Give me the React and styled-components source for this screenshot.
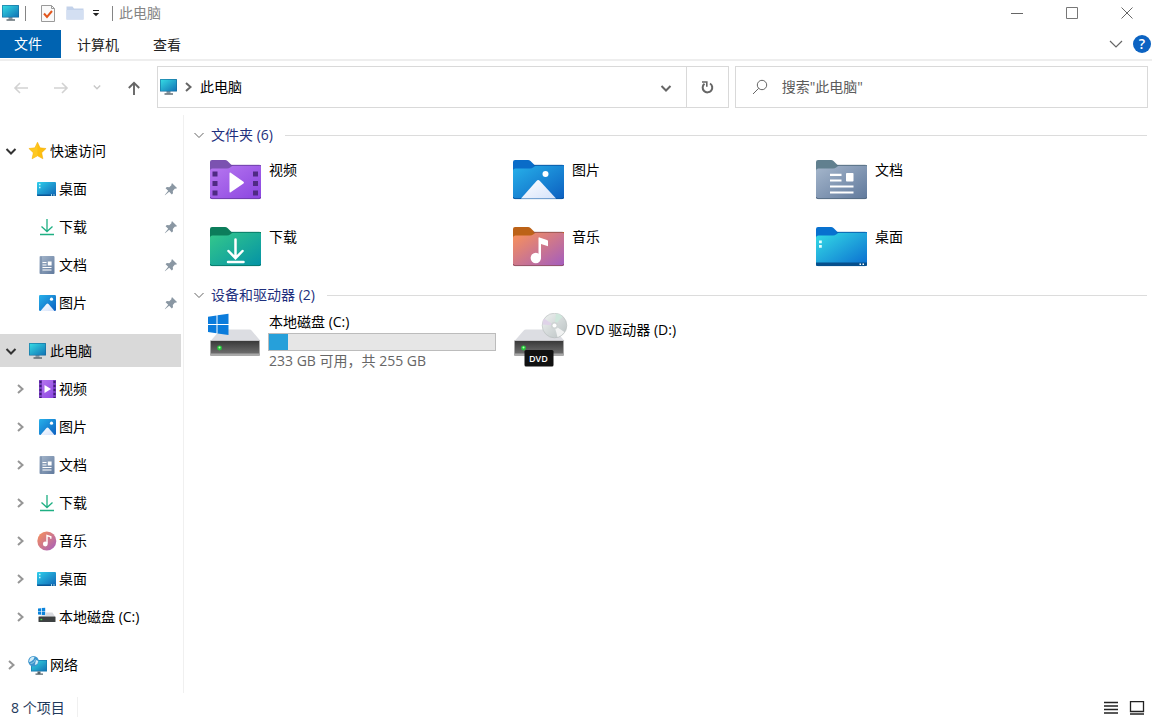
import React from 'react';
import styled, { createGlobalStyle, css } from 'styled-components';

const GlobalStyle = createGlobalStyle`
  * {
    box-sizing: border-box;
  }
  body {
    margin: 0;
    background: #fff;
    color: #000;
    font-family: "Open Sans", "Noto Sans CJK SC", sans-serif;
    font-size: 14px;
    line-height: 18px;
  }
  button, input {
    font: inherit;
    color: inherit;
    border: 0;
    padding: 0;
    background: none;
  }
  svg {
    display: block;
    flex-shrink: 0;
  }
  ul {
    list-style: none;
    margin: 0;
    padding: 0;
  }
`;

/* ---------- icons ---------- */

const GradientSheet = styled.svg`
  position: absolute;
`;

const gradients = [
  ['gMonitor', '#35dbe4', '#1273b5'],
  ['gDesktop', '#2fd0ec', '#0f63b4'],
  ['gVideo', '#b878f0', '#8a45e0'],
  ['gPicture', '#27b1ea', '#0c5fc0'],
  ['gDoc', '#a6b7cc', '#60799c'],
  ['gDownload', '#35c98a', '#0492a6'],
  ['gMusic', '#fb9357', '#a25cc0'],
  ['gDeskFolder', '#35dde6', '#0a6cd0'],
  ['gSnow', '#ffffff', '#d5e2fa'],
  ['gDisc', '#f0f3f2', '#b9c1c2'],
];

const Gradients = () => (
  <GradientSheet width="0" height="0" aria-hidden="true">
    <defs>
      {gradients.map(([id, from, to]) => (
        <linearGradient key={id} id={id} x1="0" y1="0" x2="1" y2="1">
          <stop offset="0" stopColor={from} />
          <stop offset="1" stopColor={to} />
        </linearGradient>
      ))}
      <linearGradient id="gDrive" x1="0" y1="0" x2="0" y2="1">
        <stop offset="0" stopColor="#393939" />
        <stop offset="1" stopColor="#6d6d6d" />
      </linearGradient>
    </defs>
  </GradientSheet>
);

const Svg = ({ w = 20, h = 20, children, ...rest }) => (
  <svg width={w} height={h} viewBox={`0 0 ${w} ${h}`} fill="none" aria-hidden="true" {...rest}>
    {children}
  </svg>
);

const MonitorIcon = () => (
  <Svg>
    <path d="M7.5 14h4v2.5h-4z" fill="#8a98a3" />
    <rect x="1" y="2" width="17" height="12.5" rx=".6" fill="#176a9c" />
    <rect x="1.6" y="2.6" width="15.8" height="11.3" fill="url(#gMonitor)" />
    <path d="M5.5 17h8.5" stroke="#4b5960" strokeWidth="1.3" />
  </Svg>
);

const StarIcon = () => (
  <Svg>
    <path d="M9.5 1.2l2.6 5.6 6 .7-4.4 4.2 1.2 6.1-5.4-3-5.4 3 1.2-6.1L.9 7.500l6-.7z" fill="#fdbf0f" stroke="#f5a800" strokeWidth=".5" />
    <path d="M9.500 1.500v13.200l-5.200 2.900 1.200-5.900L1.300 7.600l5.700-.7z" fill="#ffcf2e" opacity=".6" />
  </Svg>
);

const DesktopIcon = () => (
  <Svg>
    <rect x="0" y="3" width="19" height="14" rx="1" fill="url(#gDesktop)" />
    <path d="M0 15.500h19V16a1 1 0 0 1-1 1H1a1 1 0 0 1-1-1z" fill="#0a5696" />
    <path d="M2 5.500h1.500M2 8.500h1.500M14 16h1M16.500 16h1" stroke="#c8f6ff" strokeWidth="1.3" />
  </Svg>
);

const DownloadIcon = () => (
  <Svg>
    <path d="M10 2v12.500M4.500 9.500l5.500 5 5.500-5M3 17.500h14" stroke="#1eaf83" strokeWidth="1.3" />
  </Svg>
);

const DocIcon = () => (
  <Svg>
    <rect x="2.500" y="1" width="15" height="18" rx="1" fill="url(#gDoc)" />
    <path d="M4 1.500v17" stroke="#6c83a2" />
    <path d="M5.500 7.500h4M5.500 10h4M5.500 12.500h9M5.500 15h9" stroke="#fff" strokeWidth="1.100" />
    <path d="M10.800 6.500h3.800v4h-3.800z" fill="#fff" />
  </Svg>
);

const PictureIcon = () => (
  <Svg>
    <rect x="2" y="2" width="17" height="16" rx="1.200" fill="url(#gPicture)" />
    <path d="M3.500 18l6-7q1-1 2 0l6 7z" fill="url(#gSnow)" />
    <circle cx="14.500" cy="6.200" r="1.600" fill="#fff" />
  </Svg>
);

const VideoIcon = () => (
  <Svg>
    <rect x="2" y="1" width="17" height="18" rx="1" fill="url(#gVideo)" />
    <path d="M2 1h3v18H2zM16 1h3v18h-3z" fill="#7a3fc4" />
    <path d="M3.500 2v17M17.500 2v17" stroke="#3f1d74" strokeWidth="2" strokeDasharray="2 2" />
    <path d="M7.500 6v8l6.500-4z" fill="#fff" />
  </Svg>
);

const MusicIcon = () => (
  <Svg>
    <circle cx="9.800" cy="10" r="9.500" fill="url(#gMusic)" />
    <path d="M10 12.500V4.500l3.800 1.300v2" stroke="#fff" strokeWidth="1.400" />
    <circle cx="8.300" cy="13" r="2.400" fill="#fff" />
  </Svg>
);

const SmallDriveIcon = () => (
  <Svg>
    <path d="M1 1.500L4 1.200v3H1zM4.700 1.100L8.200.7v3.500H4.700zM1 4.800h3v3l-3-.3zM4.700 4.800h3.500v3.500l-3.500-.4z" fill="#0b84dc" />
    <path d="M8.500 5.500h7l2.500 4H2.500L4.500 8.500h4z" fill="#d9dbe0" />
    <rect x="1.500" y="9.500" width="17" height="5.500" rx=".5" fill="#3d4142" />
    <path d="M3.500 12.500h1.700" stroke="#4be04b" strokeWidth="1.400" />
  </Svg>
);

const NetworkIcon = () => (
  <Svg>
    <rect x="3" y="5" width="16" height="11.500" fill="#1679ae" />
    <rect x="3.700" y="5.700" width="14.600" height="10" fill="url(#gMonitor)" />
    <path d="M9.500 16.500h3v2h-3zM7.500 18.500h7.500v1.200H7.500z" fill="#56656e" />
    <circle cx="5.500" cy="6.200" r="5.300" fill="#3c94cd" />
    <path d="M2 3.500q2-2.500 4.500-1.500l-1 2.500L3 6.500.8 7zM8 5l2.300 1-1 3-2.500 1z" fill="#d1ecf7" />
    <path d="M2.500 8.500q3 .5 5-4" stroke="#93cbe7" />
  </Svg>
);

const PinIcon = () => (
  <Svg w={14} h={14}>
    <path d="M8.200 1.200L13 6l-1 .8-1-.2-2.200 2.300.2 2.300-1.200 1.200L5.200 9.800 1 13.200.8 13l3.400-4.200-2.600-2.600L2.800 5l2.500.2 2.300-2.200-.3-1z" fill="#8a97a3" />
  </Svg>
);

const chevrons = {
  down: 'M1.500 4l4.500 4.500L10.500 4',
  right: 'M4 2l4.500 4L4 10',
};

const Chevron = ({ dir = 'down', color = '#333', weight = 2 }) => (
  <Svg w={12} h={12}>
    <path d={chevrons[dir]} stroke={color} strokeWidth={weight} />
  </Svg>
);

/* big folder: tab, body, then whatever sits on the front */
const Folder = ({ tab, fill, edge, children }) => (
  <Svg w={51} h={41}>
    <path d="M0 3a2 2 0 0 1 2-2h13q1.500 0 2.500 1l4 4H51v8H0z" fill={tab} />
    <path d="M0 12q0-2.500 2.500-2.500H17q2 0 3.500-1.300T24 6.500h25.500A1.500 1.500 0 0 1 51 8v30.500A1.500 1.500 0 0 1 49.500 40h-48A1.500 1.500 0 0 1 0 38.500z" fill={fill} />
    <path d="M20.500 6.300h29.200" stroke={edge} strokeWidth=".8" />
    <path d="M.4 38q.1 1.600 1.500 1.600h47.200q1.400 0 1.500-1.600" stroke={edge} strokeWidth=".9" />
    {children}
  </Svg>
);

const VideoFolder = () => (
  <Folder tab="#7b52b0" fill="url(#gVideo)" edge="#6a3ba5">
    <path d="M2.500 12.500h5v5h-5zM2.500 22h5v5h-5zM2.500 31.500h5v5h-5zM43 12.500h5v5h-5zM43 22h5v5h-5zM43 31.500h5v5h-5z" fill="#4f2a84" />
    <path d="M19.500 14.500v18q0 1.500 1.200.7l12.800-8.800q1-.8 0-1.600l-12.800-9q-1.200-.8-1.200.7z" fill="#fff" />
  </Folder>
);

const PictureFolder = () => (
  <Folder tab="#0a6cc8" fill="url(#gPicture)" edge="#0a559f">
    <path d="M8 39.500L23.500 22q1.700-1.800 3.400 0L43 39.500z" fill="url(#gSnow)" />
    <circle cx="32.500" cy="15" r="3" fill="#fff" />
  </Folder>
);

const DocFolder = () => (
  <Folder tab="#61808f" fill="url(#gDoc)" edge="#53697f">
    <path d="M14 15.800h11.500M14 21.500h11.500M14 27.500h23.500M14 33.500h23.500" stroke="#fff" strokeWidth="2.200" />
    <rect x="30" y="14" width="7.500" height="8.500" rx=".8" fill="#fff" />
  </Folder>
);

const DownloadFolder = () => (
  <Folder tab="#0c7d5b" fill="url(#gDownload)" edge="#087768">
    <path d="M25.500 13.500v18M18.500 25l7 7.200 7-7.200M18 36h15.500" stroke="#fff" strokeWidth="2.500" strokeLinecap="round" />
  </Folder>
);

const MusicFolder = () => (
  <Folder tab="#bc6217" fill="url(#gMusic)" edge="#8d5060">
    <path d="M25.500 12q0-.8 1-.6l7.500 2.500q1 .3 1 1.200v5.200l-7-2.200v14.500h-2.500z" fill="#fff" />
    <circle cx="22.800" cy="32" r="5.200" fill="#fff" />
  </Folder>
);

const DesktopFolder = () => (
  <Folder tab="#0871cf" fill="url(#gDeskFolder)" edge="#075aa5">
    <path d="M0 36.500h51v2a1.500 1.500 0 0 1-1.500 1.500h-48A1.500 1.500 0 0 1 0 38.500z" fill="#07508d" />
    <path d="M3 14.500h2.800v2.800H3zM3 19h2.800v2.800H3z" fill="#e5ffff" />
    <path d="M43.500 38.300h1.500M46.500 38.300H48" stroke="#fff" strokeWidth="1.400" />
  </Folder>
);

const DriveBody = () => (
  <>
    <path d="M13 17.500h27.500q1.500 0 2.300 1.200L51.500 29h-50l9-10.300q1-1.200 2.500-1.200z" fill="#dcdde2" />
    <path d="M1 28.500h50V43q0 1-1 1H2q-1 0-1-1z" fill="#a9a9a9" />
    <path d="M2 29h48v12.500H2z" fill="url(#gDrive)" />
    <circle cx="10.500" cy="36" r="2.400" fill="#24c83a" />
    <circle cx="10.500" cy="35.600" r="1" fill="#b6ffb0" />
  </>
);

const SystemDrive = () => (
  <Svg w={54} h={55}>
    <g transform="translate(1 -1)">
      <DriveBody />
    </g>
    <path d="M0 3.800l8.500-1.300V11H0zM9.500 2.300L20.500.7V11h-11zM0 12h8.500v8.300L0 19zM9.500 12h11v10L9.500 20.400z" fill="#0b7cdc" />
  </Svg>
);

const DvdText = styled.text`
  font: 600 9px "Open Sans", sans-serif;
  fill: #fff;
`;

const DvdDrive = () => (
  <Svg w={57} h={55}>
    <g transform="translate(2 -1)">
      <DriveBody />
    </g>
    <g transform="translate(3 0)">
      <circle cx="40.500" cy="12.500" r="12.300" fill="url(#gDisc)" stroke="#b5bbbb" strokeWidth=".6" />
      <path d="M40.500 12.500L30 5.500a12.300 12.300 0 0 0-1.500 6z" fill="#dfd3e8" />
      <path d="M40.500 12.500l3 11.800a12.300 12.300 0 0 0 7-5.300z" fill="#fbfbfb" opacity=".8" />
      <path d="M40.500 12.500L42 .5a12.300 12.300 0 0 1 6.500 3z" fill="#cfe7dc" />
      <circle cx="40.500" cy="12.500" r="3.600" fill="#cfd4d4" />
      <circle cx="40.500" cy="12.500" r="2" fill="#fff" />
      <rect x="10.500" y="37" width="29" height="16.500" rx="1.500" fill="#111" />
      <DvdText x="15" y="49">DVD</DvdText>
    </g>
  </Svg>
);

/* ---------- title bar ---------- */

const Window = styled.div`
  min-height: 100vh;
  display: flex;
  flex-direction: column;
`;

const TitleBar = styled.header`
  height: 30px;
  display: flex;
  align-items: flex-start;
  padding-left: 1px;
`;

const QuickTools = styled.div`
  height: 26px;
  display: flex;
  align-items: center;
`;

const ToolButton = styled.button`
  width: ${({ $w }) => $w}px;
  height: 26px;
  display: flex;
  align-items: center;
  justify-content: center;
`;

const Divider = styled.span`
  width: 1px;
  height: 15px;
  background: #858585;
  margin: 0 ${({ $after }) => $after}px 0 ${({ $before }) => $before}px;
`;

const Title = styled.h1`
  margin: 0;
  font-size: 14px;
  font-weight: 400;
  color: #858585;
`;

const WindowButtons = styled.div`
  margin-left: auto;
  display: flex;
  gap: 5px;
`;

/* ---------- ribbon ---------- */

const Ribbon = styled.nav`
  height: 31px;
  display: flex;
  align-items: flex-start;
  border-bottom: 2px solid #eee;
`;

const Tab = styled.button`
  height: 28px;
  padding: 1px 18px 0 16px;
  color: #222;
  ${({ $primary }) =>
    $primary &&
    css`
      padding: 0 19px 0 14px;
      background: #0063b1;
      color: #fff;
    `}
`;

const RibbonEnd = styled.div`
  height: 28px;
  margin-left: auto;
  padding-right: 1px;
  display: flex;
  align-items: center;
  gap: 10px;
`;

const Help = styled.button`
  width: 18px;
  height: 18px;
  border-radius: 50%;
  background: #0c63c2;
  color: #fff;
  font-weight: 600;
  line-height: 18px;
`;

/* ---------- address row ---------- */

const AddressRow = styled.div`
  display: flex;
  align-items: center;
  padding: 5px 4px 7px 3px;
`;

const NavButton = styled.button`
  width: ${({ $w }) => $w}px;
  height: 42px;
  display: flex;
  align-items: center;
  justify-content: center;
`;

const AddressBox = styled.div`
  flex: 3 1 0;
  height: 42px;
  display: flex;
  align-items: center;
  gap: 3px;
  border: 1px solid #d9d9d9;
  padding-left: 1px;
`;

const Crumb = styled.button`
  margin-left: 3px;
`;

const AddressEnd = styled.div`
  margin-left: auto;
  height: 40px;
  display: flex;
`;

const Refresh = styled(NavButton)`
  height: 40px;
  border-left: 1px solid #d9d9d9;
`;

const SearchBox = styled.label`
  flex: 2 1 0;
  height: 42px;
  margin-left: 6px;
  padding: 0 16px;
  display: flex;
  align-items: center;
  gap: 14px;
  border: 1px solid #d9d9d9;
`;

const SearchInput = styled.input`
  flex: 1;
  min-width: 0;
  outline: none;
  &::placeholder {
    color: #5c5c5c;
    opacity: 1;
  }
`;

/* ---------- body ---------- */

const Body = styled.div`
  flex: 1;
  display: flex;
`;

const Sidebar = styled.aside`
  width: 184px;
  flex-shrink: 0;
  padding: 19px 2px 0 0;
  border-right: 1px solid #f0f0f0;
`;

const Branch = styled.ul`
  display: flex;
  flex-direction: column;
  gap: 5px;
  & + & {
    margin-top: 15px;
  }
`;

const TreeRow = styled.li`
  height: 33px;
  display: flex;
  align-items: center;
  padding: 0 3px 0 ${({ $child }) => ($child ? 11 : 2)}px;
  background: ${({ $selected }) => ($selected ? '#d9d9d9' : 'transparent')};
`;

const Expander = styled.button`
  width: 18px;
  height: 18px;
  margin-right: 8px;
  display: flex;
  align-items: center;
  justify-content: center;
`;

const TreeLink = styled.a`
  flex: 1;
  display: flex;
  align-items: center;
  gap: 2px;
  white-space: nowrap;
  color: inherit;
  text-decoration: none;
`;

const Content = styled.main`
  flex: 1;
  min-width: 0;
  padding: 10px 5px 0 9px;
`;

const GroupHeader = styled.h2`
  margin: 0 0 ${({ $gap }) => $gap}px;
  height: 20px;
  display: flex;
  align-items: center;
  gap: 12px;
  font-size: 14px;
  font-weight: 400;
  color: #1e2f7d;
  &::after {
    content: "";
    flex: 1;
    height: 1px;
    background: #dcdcdc;
  }
`;

const GroupToggle = styled.button`
  display: flex;
  align-items: center;
  gap: 6px;
`;

const TileGrid = styled.div`
  display: grid;
  grid-template-columns: repeat(auto-fill, 303px);
  row-gap: 26px;
  padding-left: ${({ $inset }) => $inset}px;
  margin-bottom: 18px;
`;

const Tile = styled.a`
  display: flex;
  gap: 8px;
  color: inherit;
  text-decoration: none;
`;

const TileLabel = styled.span`
  padding-top: ${({ $top }) => $top}px;
`;

const DriveInfo = styled.div`
  width: 228px;
  margin-left: -2px;
`;

const DriveLine = styled.div`
  padding-left: 1px;
  color: ${({ $muted }) => ($muted ? '#666' : '#000')};
`;

const Capacity = styled.div`
  height: 18px;
  margin: 2px 0 1px;
  border: 1px solid #bcbcbc;
  background: #e6e6e6;
`;

const CapacityFill = styled.div`
  height: 100%;
  background: #26a0da;
`;

/* ---------- status bar ---------- */

const StatusBar = styled.footer`
  height: 24px;
  padding: 3px 6px 0 11px;
  display: flex;
  align-items: center;
  color: #1e395b;
`;

const StatusText = styled.span`
  padding: 2px 12px 0 0;
  border-right: 1px solid #f0f0f0;
`;

const ViewModes = styled.div`
  margin-left: auto;
  display: flex;
  gap: 8px;
  padding-top: 2px;
`;

const ViewButton = styled.button`
  width: 18px;
  height: 18px;
  display: flex;
  align-items: center;
  justify-content: center;
`;

const tree = [
  {
    name: '快速访问',
    icon: StarIcon,
    open: true,
    pinned: true,
    children: [
      { name: '桌面', icon: DesktopIcon },
      { name: '下载', icon: DownloadIcon },
      { name: '文档', icon: DocIcon },
      { name: '图片', icon: PictureIcon },
    ],
  },
  {
    name: '此电脑',
    icon: MonitorIcon,
    open: true,
    selected: true,
    children: [
      { name: '视频', icon: VideoIcon },
      { name: '图片', icon: PictureIcon },
      { name: '文档', icon: DocIcon },
      { name: '下载', icon: DownloadIcon },
      { name: '音乐', icon: MusicIcon },
      { name: '桌面', icon: DesktopIcon },
      { name: '本地磁盘 (C:)', icon: SmallDriveIcon },
    ],
  },
  { name: '网络', icon: NetworkIcon, children: [] },
];

const folders = [
  { name: '视频', icon: VideoFolder },
  { name: '图片', icon: PictureFolder },
  { name: '文档', icon: DocFolder },
  { name: '下载', icon: DownloadFolder },
  { name: '音乐', icon: MusicFolder },
  { name: '桌面', icon: DesktopFolder },
];

const usedPercent = ((255 - 233) / 255) * 100;

const TreeBranch = ({ node }) => (
  <Branch>
    <TreeRow $selected={node.selected}>
      <Expander aria-label={node.name}>
        <Chevron dir={node.open ? 'down' : 'right'} color={node.open ? '#333' : '#969696'} />
      </Expander>
      <TreeLink href="#">
        <node.icon />
        {node.name}
      </TreeLink>
    </TreeRow>
    {node.children.map((item) => (
      <TreeRow key={item.name} $child>
        <Expander aria-label={item.name}>
          {!node.pinned && <Chevron dir="right" color="#969696" />}
        </Expander>
        <TreeLink href="#">
          <item.icon />
          {item.name}
        </TreeLink>
        {node.pinned && <PinIcon />}
      </TreeRow>
    ))}
  </Branch>
);

const Group = ({ title, gap, inset, children }) => (
  <section>
    <GroupHeader $gap={gap}>
      <GroupToggle>
        <Chevron color="#666" weight={1} />
        {title}
      </GroupToggle>
    </GroupHeader>
    <TileGrid $inset={inset}>{children}</TileGrid>
  </section>
);

const App = () => {
  return (
    <Window>
      <GlobalStyle />
      <Gradients />
      <TitleBar>
        <QuickTools>
          <MonitorIcon />
          <Divider $before={4} $after={12} />
          <ToolButton $w={20} aria-label="属性">
            <Svg w={14} h={18}>
              <path d="M.5 1.500h10l3 3v13H.5z" fill="#fafafa" stroke="#9a9a9a" />
              <path d="M10.500 1.500v3h3" stroke="#9a9a9a" />
              <path d="M3 9.500l3 3.500 5-6" stroke="#e2571e" strokeWidth="2" />
            </Svg>
          </ToolButton>
          <ToolButton $w={33} aria-label="新建文件夹">
            <Svg w={18} h={16}>
              <path d="M.5 1.500h6l1.500 2h9.500v11H.5z" fill="#c3d2ea" />
              <path d="M.5 5h17v9.500H.5z" fill="#d3dff2" />
            </Svg>
          </ToolButton>
          <ToolButton $w={10} aria-label="自定义快速访问工具栏">
            <Svg w={8} h={8}>
              <path d="M1 1.500h6" stroke="#222" />
              <path d="M.8 4h6.400L4 7.200z" fill="#222" />
            </Svg>
          </ToolButton>
          <Divider $before={11} $after={6} />
          <Title>此电脑</Title>
        </QuickTools>
        <WindowButtons>
          <ToolButton $w={50} aria-label="最小化">
            <Svg w={12} h={12}><path d="M0 6.500h12" stroke="#666" /></Svg>
          </ToolButton>
          <ToolButton $w={50} aria-label="最大化">
            <Svg w={12} h={12}><path d="M.5.5h11v11H.5z" stroke="#777" /></Svg>
          </ToolButton>
          <ToolButton $w={50} aria-label="关闭">
            <Svg w={12} h={12}><path d="M.5.5l11 11M11.500.5l-11 11" stroke="#666" /></Svg>
          </ToolButton>
        </WindowButtons>
      </TitleBar>

      <Ribbon>
        <Tab $primary>文件</Tab>
        <Tab>计算机</Tab>
        <Tab>查看</Tab>
        <RibbonEnd>
          <ToolButton $w={14} aria-label="展开功能区">
            <Svg w={14} h={12}><path d="M1 3l6 6 6-6" stroke="#666" strokeWidth="1.200" /></Svg>
          </ToolButton>
          <Help>?</Help>
        </RibbonEnd>
      </Ribbon>

      <AddressRow>
        <NavButton $w={36} aria-label="后退">
          <Svg w={16} h={14}><path d="M15 8H2M7 3L2 8l5 5" stroke="#d2d2d2" strokeWidth="1.600" /></Svg>
        </NavButton>
        <NavButton $w={44} aria-label="前进">
          <Svg w={16} h={14}><path d="M1 8h13M9 3l5 5-5 5" stroke="#d2d2d2" strokeWidth="1.600" /></Svg>
        </NavButton>
        <NavButton $w={28} aria-label="最近浏览的位置">
          <Svg w={8} h={8}><path d="M.8 2.500L4 5.700l3.200-3.200" stroke="#c8c8c8" strokeWidth="1.400" /></Svg>
        </NavButton>
        <NavButton $w={46} aria-label="上移">
          <Svg w={14} h={16}><path d="M7 16V4M1.800 9L7 3.800 12.200 9" stroke="#666" strokeWidth="1.900" /></Svg>
        </NavButton>
        <AddressBox>
          <MonitorIcon />
          <Chevron dir="right" color="#666" />
          <Crumb>此电脑</Crumb>
          <AddressEnd>
            <NavButton $w={40} aria-label="以前的位置">
              <Chevron color="#666" />
            </NavButton>
            <Refresh $w={42} aria-label="刷新">
              <Svg w={13} h={14}>
                <path d="M9 3.500a4.800 4.800 0 1 1-5.500.3" stroke="#666" strokeWidth="2" />
                <path d="M1 2h4.800v4.800" stroke="#666" strokeWidth="1.600" />
              </Svg>
            </Refresh>
          </AddressEnd>
        </AddressBox>
        <SearchBox>
          <Svg w={16} h={16}>
            <circle cx="10" cy="6" r="4.700" stroke="#666" />
            <path d="M6.700 9.300L1 15" stroke="#666" />
          </Svg>
          <SearchInput type="text" aria-label="搜索" placeholder={'搜索"此电脑"'} />
        </SearchBox>
      </AddressRow>

      <Body>
        <Sidebar>
          {tree.map((node) => (
            <TreeBranch key={node.name} node={node} />
          ))}
        </Sidebar>
        <Content>
          <Group title="文件夹 (6)" gap={14} inset={17}>
            {folders.map((folder) => (
              <Tile key={folder.name} href="#">
                <folder.icon />
                <TileLabel $top={2}>{folder.name}</TileLabel>
              </Tile>
            ))}
          </Group>
          <Group title="设备和驱动器 (2)" gap={8} inset={15}>
            <Tile href="#">
              <SystemDrive />
              <DriveInfo>
                <DriveLine>本地磁盘 (C:)</DriveLine>
                <Capacity>
                  <CapacityFill style={{ width: `${usedPercent}%` }} />
                </Capacity>
                <DriveLine $muted>233 GB 可用，共 255 GB</DriveLine>
              </DriveInfo>
            </Tile>
            <Tile href="#">
              <DvdDrive />
              <TileLabel $top={8}>DVD 驱动器 (D:)</TileLabel>
            </Tile>
          </Group>
        </Content>
      </Body>

      <StatusBar>
        <StatusText>8 个项目</StatusText>
        <ViewModes>
          <ViewButton aria-label="详细信息">
            <Svg w={16} h={14}><path d="M1 1.500h14M1 5h14M1 8.500h14M1 12h14" stroke="#222" strokeWidth="1.300" /></Svg>
          </ViewButton>
          <ViewButton aria-label="大图标">
            <Svg w={16} h={14}>
              <path d="M1.500.5h13v10h-13z" stroke="#222" strokeWidth="1.300" />
              <path d="M1 13h14" stroke="#222" strokeWidth="1.500" />
            </Svg>
          </ViewButton>
        </ViewModes>
      </StatusBar>
    </Window>
  );
};

export default App;
